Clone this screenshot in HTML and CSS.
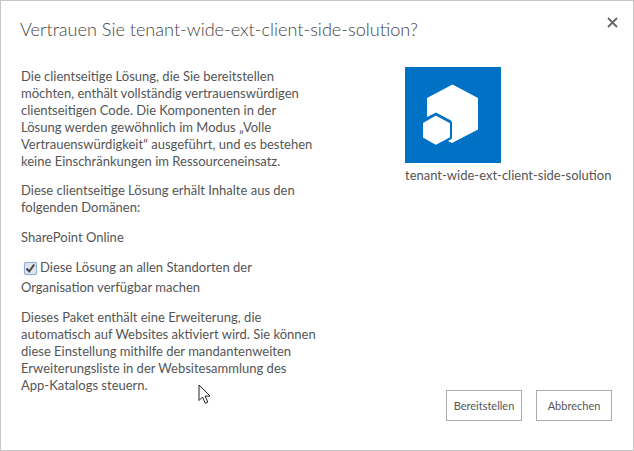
FILE: index.html
```html
<!DOCTYPE html>
<html lang="de">
<head>
  <meta charset="UTF-8" />
  <title>Vertrauen Sie tenant-wide-ext-client-side-solution?</title>
  <link rel="stylesheet" href="styles.css">
</head>
<body>
  <div class="dialog">
    <header class="dialog-header">
      <h1>Vertrauen Sie tenant-wide-ext-client-side-solution?</h1>
      <button class="close" aria-label="Schließen">
        <svg width="11" height="11" viewBox="0 0 11 11"><path d="M1 1l9 9M10 1l-9 9" stroke="#666" stroke-width="1.8" fill="none"/></svg>
      </button>
    </header>

    <div class="dialog-body">
      <div class="text-col">
        <p>Die clientseitige Lösung, die Sie bereitstellen möchten, enthält vollständig vertrauenswürdigen clientseitigen Code. Die Komponenten in der Lösung werden gewöhnlich im Modus „Volle Vertrauenswürdigkeit“ ausgeführt, und es bestehen keine Einschränkungen im Ressourceneinsatz.</p>
        <p class="domains">Diese clientseitige Lösung erhält Inhalte aus den folgenden Domänen:</p>
        <p class="source">SharePoint Online</p>
        <div class="deploy-option">
          <span class="check">
            <svg width="11" height="11" viewBox="0 0 11 11"><path d="M1.500 5.500l2.700 3 5-7" stroke="#444" stroke-width="2" fill="none"/></svg>
          </span>Diese Lösung an allen Standorten der<br>
          Organisation verfügbar machen
        </div>
        <p>Dieses Paket enthält eine Erweiterung, die automatisch auf Websites aktiviert wird. Sie können diese Einstellung mithilfe der mandantenweiten Erweiterungsliste in der Websitesammlung des <span class="nowrap">App-Katalogs</span> steuern.</p>
      </div>

      <div class="app-col">
        <div class="app-logo">
          <svg width="96" height="96" viewBox="0 0 96 96">
            <path d="M47.500 17.500L73 31v31.500L47 76l-4-2 3-2V53.500L31 45.500 22 50V31z" fill="#fff"/>
            <path d="M31 47.500L46 55.500v15.500L31 79 17 71V55.500z" fill="#fff" stroke="#0072c6" stroke-width="2"/>
          </svg>
        </div>
        <div class="app-name">tenant-wide-ext-client-side-solution</div>
      </div>
    </div>

    <footer class="dialog-footer">
      <button class="btn">Bereitstellen</button>
      <button class="btn">Abbrechen</button>
    </footer>

    <svg class="cursor" width="15" height="21" viewBox="0 0 15 21"><path d="M1 1v15.500l3.500-3.500 2.700 6.300 2.600-1.100-2.700-6.100h5z" fill="#fff" stroke="#222" stroke-width="1"/></svg>
  </div>
</body>
</html>
```

FILE: styles.css
```css
* {
  box-sizing: border-box;
}

body {
  margin: 0;
  background: #fff;
  font-family: 'Lato', 'Open Sans', sans-serif;
  font-size: 13px;
  line-height: 17px;
  color: #555;
}

.dialog {
  position: relative;
  display: flex;
  flex-direction: column;
  width: 634px;
  height: 451px;
  border: 1px solid #c6c6c6;
}

.dialog-header {
  display: flex;
  flex-shrink: 0;
  justify-content: space-between;
  height: 66px;
  padding: 15px 15px 0 19px;
}

.dialog-header h1 {
  margin: 0;
  font-size: 18.1px;
  line-height: 26px;
  font-weight: 300;
  color: #444;
}

.close {
  width: 11px;
  height: 11px;
  padding: 0;
  border: none;
  background: none;
}

.dialog-body {
  display: flex;
  flex: 1;
  min-height: 0;
  padding-left: 20px;
}

.text-col {
  width: 296px;
  padding-top: 1px;
}

.text-col p {
  margin: 0 0 12px;
}

.text-col .domains {
  margin-bottom: 13px;
}

.text-col .source {
  margin-bottom: 11px;
}

.nowrap {
  white-space: nowrap;
}

.deploy-option {
  margin-bottom: 12px;
  line-height: 20px;
}

.check {
  display: inline-flex;
  align-items: center;
  justify-content: center;
  width: 13px;
  height: 13px;
  margin: 0 3px 0 3px;
  vertical-align: -2px;
  background: #dfe4ea;
  border: 1px solid #8fb0da;
  border-radius: 2px;
  box-shadow: 0 0 1px #8fb0da;
}

.app-col {
  margin-left: 88px;
}

.app-logo {
  width: 96px;
  height: 96px;
  background: #0072c6;
}

.app-logo svg {
  display: block;
}

.app-name {
  margin-top: 4px;
  white-space: nowrap;
}

.dialog-footer {
  display: flex;
  flex-shrink: 0;
  justify-content: flex-end;
  gap: 14px;
  padding: 0 21px 29px 0;
}

.btn {
  width: 76px;
  height: 31px;
  padding: 0;
  border: 1px solid #ababab;
  background: #fff;
  color: #555;
  font: 11px 'Lato', 'Open Sans', sans-serif;
}

.cursor {
  position: absolute;
  left: 197px;
  top: 383px;
}
```
